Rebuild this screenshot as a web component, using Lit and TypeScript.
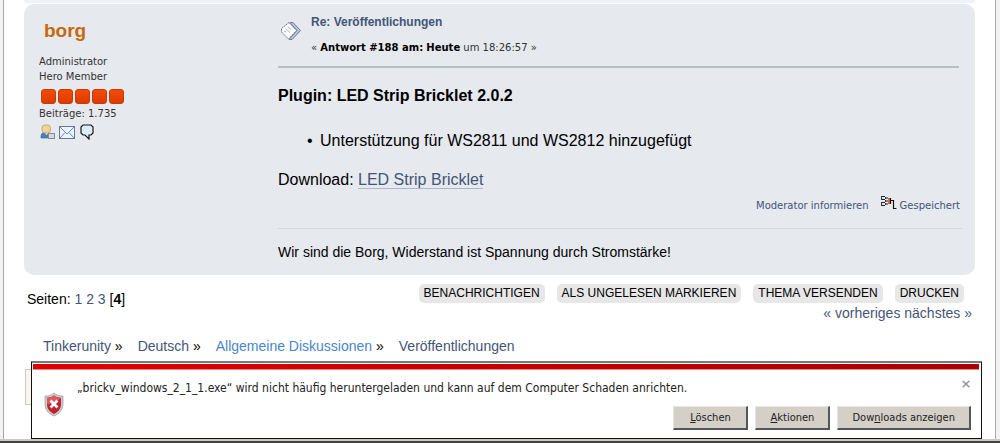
import { LitElement, html, css } from "lit";
import { customElement } from "lit/decorators.js";

@customElement("forum-post")
class ForumPost extends LitElement {
  static styles = css`
    :host {
      display: grid;
      grid-template-columns: 239px 1fr;
      padding: 11px 15px 14px;
      border-radius: 10px;
      background: #e6e9ee;
    }
    a { color: #445577; text-decoration: none; }
    h4, h5, p, ul { margin: 0; }
    .small { font: 10px/15px "DejaVu Sans", Verdana, sans-serif; color: #333; }
    .name { margin: 4px 0 11px 5px; font-size: 19px; line-height: 24px; }
    .name a { color: #c5690f; }
    .stars { display: flex; gap: 2px; margin: 5px 0 2px 2px; }
    .star {
      box-sizing: border-box;
      width: 15px;
      height: 15px;
      border: 1px solid #c43c0c;
      border-radius: 3px;
      background: linear-gradient(#f74a02, #dc3c00);
    }
    .contacts { display: flex; gap: 3px; margin: 3px 0 0 1px; }
    .contacts a { display: block; height: 16px; }
    svg { display: block; }
    .head { display: flex; gap: 9px; padding-bottom: 11px; border-bottom: 2px solid #b9bdc8; margin-right: 1px; }
    .head svg { margin: 6px 0 0 2px; }
    .subject { font-size: 12px; line-height: 15px; margin-bottom: 10px; }
    .head b { color: #000; }
    .title { font-size: 16px; line-height: 20px; font-weight: bold; margin-top: 18px; }
    .list { padding-left: 42px; margin: 25px 0 19px; font-size: 16px; line-height: 20px; }
    .list li { list-style: none; display: flex; }
    .list li::before { content: "•"; width: 13px; margin-left: -13px; }
    .text { font-size: 16px; line-height: 20px; }
    .text a { border-bottom: 1px solid #aab5d0; }
    .tools { display: flex; justify-content: flex-end; align-items: flex-end; gap: 12px; height: 23px; }
    .logged { display: flex; align-items: flex-end; gap: 3px; }
    .logged svg { margin-bottom: 3px; }
    .sig { margin-top: 15px; padding-top: 15px; border-top: 1px solid #d4d6da; font-size: 14px; line-height: 17px; margin-right: -2px; }
  `;

  render() {
    return html`
      <div>
        <h4 class="name"><a href="#">borg</a></h4>
        <div class="small">Administrator</div>
        <div class="small">Hero Member</div>
        <div class="stars">${[1, 2, 3, 4, 5].map(() => html`<span class="star"></span>`)}</div>
        <div class="small">Beiträge: 1.735</div>
        <div class="contacts">
          <a href="#" aria-label="Profil">
            <svg width="16" height="16" viewBox="0 0 16 16">
              <path d="M1 14V12Q1 9 4 8.500H8Q11 9 11 12V14Z" fill="#4b7fb8" stroke="#376799" stroke-width=".6" />
              <path d="M4 8.500L6.500 11L8.500 8.500Z" fill="#dcebf8" />
              <rect x="2" y="1" width="8.500" height="8" rx="3" fill="#ecd39b" stroke="#c3a05c" stroke-width=".8" />
              <rect x="8.500" y="9.500" width="6" height="5" fill="#d5d8dc" stroke="#858b94" />
            </svg>
          </a>
          <a href="#" aria-label="E-Mail">
            <svg width="17" height="16" viewBox="0 0 17 16">
              <rect x=".5" y="2.500" width="15" height="12" fill="#eaf4fc" stroke="#64799a" />
              <path d="M1 3L8 10L15 3M1 14L6 8.500M15 14L10 8.500" fill="none" stroke="#7389a8" />
            </svg>
          </a>
          <a href="#" aria-label="Persönliche Nachricht">
            <svg width="16" height="16" viewBox="0 0 16 16">
              <path d="M4 1H12L14 3V9L12 11H10V15L6 11H4L2 9V3Z" fill="#dcecf8" stroke="#15181c" stroke-width="1.200" />
            </svg>
          </a>
        </div>
      </div>
      <div>
        <div class="head">
          <svg width="22" height="20" viewBox="0 0 22 20">
            <path d="M10 1.500H13L20.500 9.500L12 18.500H9L17 9.500Z" fill="#b8c4e8" stroke="#747c92" />
            <path d="M9 1.500L16.500 9.500L8.500 18L1.500 11V7.500Z" fill="#fafbfd" stroke="#777d88" stroke-dasharray="2 .6" />
            <path d="M4 10L6 11M5.500 7.500L10 11.500M8 6L11.500 9" stroke="#b3b8c2" />
          </svg>
          <div>
            <h5 class="subject"><a href="#">Re: Veröffentlichungen</a></h5>
            <div class="small">« <b>Antwort #188 am:</b> <b>Heute</b> um 18:26:57 »</div>
          </div>
        </div>
        <p class="title">Plugin: LED Strip Bricklet 2.0.2</p>
        <ul class="list"><li>Unterstützung für WS2811 und WS2812 hinzugefügt</li></ul>
        <p class="text">Download: <a href="#">LED Strip Bricklet</a></p>
        <div class="tools small">
          <a href="#">Moderator informieren</a>
          <a class="logged" href="#">
            <svg width="16" height="15" viewBox="0 0 16 15">
              <path d="M1 1.500H4M1 4.500H4M1 7.500H4M1 10.500H4M4.500 3H7M4.500 6H7M4.500 9H7" stroke="#222" stroke-width="1.200" />
              <path d="M.500 1V5M.500 7V11M4.500 2V4M4.500 5V7M4.500 8V10" stroke="#333" />
              <path d="M8 3V9" stroke="#e8401c" stroke-width="1.600" />
              <path d="M9.500 3V9M9.500 5.500H12.500V13.500H15.500" fill="none" stroke="#111" stroke-width="1.200" />
            </svg>
            Gespeichert
          </a>
        </div>
        <div class="sig">Wir sind die Borg, Widerstand ist Spannung durch Stromstärke!</div>
      </div>
    `;
  }
}

@customElement("download-warning")
class DownloadWarning extends LitElement {
  static styles = css`
    :host {
      display: block;
      box-sizing: border-box;
      padding: 1px 2px 8px 1px;
      border: 1px solid #111;
      border-top: 2px solid #777a7c;
      background: #fff;
      font: 12px/16px "DejaVu Sans Condensed", Tahoma, sans-serif;
      color: #222;
    }
    .bar { height: 5px; background: linear-gradient(90deg, #e20000, #aa0000); border-bottom: 1px solid #e88; }
    .body { display: flex; padding-left: 11px; }
    .shield { display: block; margin-top: 22px; }
    .main { flex: 1; padding-left: 13px; }
    .line { display: flex; justify-content: space-between; padding: 6px 7px 0 0; }
    .message { margin: 4px 0 0; }
    .close { border: 0; background: none; padding: 0; width: 12px; height: 16px; color: #999; font: bold 13px/16px "DejaVu Sans", sans-serif; }
    .actions { display: flex; justify-content: flex-end; gap: 7px; margin-top: 10px; padding-right: 8px; }
    .action {
      height: 24px;
      min-width: 75px;
      padding: 0 14px;
      border: 1px solid;
      border-width: 1px 2px 2px 1px;
      border-color: #e6e4de #55565a #55565a #e6e4de;
      background: #d4d0c8;
      color: #222;
      font: 11px/16px "DejaVu Sans Condensed", Tahoma, sans-serif;
    }
  `;

  render() {
    return html`
      <div class="bar"></div>
      <div class="body">
        <svg class="shield" width="20" height="25" viewBox="0 0 20 25">
          <path d="M10 1C7 3.500 4 4 1 4V12C1 18 5 22 10 24C15 22 19 18 19 12V4C16 4 13 3.500 10 1Z" fill="#c9cccd" stroke="#989c9e" stroke-width=".7" />
          <path d="M10 3.500C8 5 5.500 5.700 3 5.800V12C3 17 6 20 10 22C14 20 17 17 17 12V5.800C14.500 5.700 12 5 10 3.500Z" fill="#c3202b" />
          <path d="M10 3.500C8 5 5.500 5.700 3 5.800V12Q10 13 17 6Q12 5.500 10 3.500Z" fill="#dd5960" />
          <path d="M6.500 8.500L13.500 15.500M13.500 8.500L6.500 15.500" stroke="#fff" stroke-width="2.800" />
        </svg>
        <div class="main">
          <div class="line">
            <p class="message">„brickv_windows_2_1_1.exe“ wird nicht häufig heruntergeladen und kann auf dem Computer Schaden anrichten.</p>
            <button class="close" aria-label="Schließen">×</button>
          </div>
          <div class="actions">
            <button class="action"><u>L</u>öschen</button>
            <button class="action"><u>A</u>ktionen</button>
            <button class="action">Dow<u>n</u>loads anzeigen</button>
          </div>
        </div>
      </div>
    `;
  }
}

@customElement("app-root")
class AppRoot extends LitElement {
  static styles = css`
    :host {
      display: flex;
      flex-direction: column;
      position: relative;
      height: 100vh;
      overflow: hidden;
      background: #f3f3f3;
      font-family: "Liberation Sans", Arial, sans-serif;
      color: #000;
    }
    a { color: #445577; text-decoration: none; }
    .page { flex: 1; min-height: 0; margin: 0 4px 0 3px; padding: 0 20px; border: solid #a9a9a9; border-width: 0 1px; background: #fff; }
    .previous { height: 3px; margin-bottom: 1px; border-radius: 0 0 10px 10px; background: #eff3f7; }
    .under { display: flex; justify-content: space-between; padding: 9px 3px 0; font-size: 14px; line-height: 18px; }
    .pages { padding-top: 6px; }
    .side { text-align: right; }
    .buttons { display: flex; gap: 12px; padding-right: 8px; margin-bottom: 1px; }
    .buttons { justify-content: flex-end; }
    .buttons a { padding: 0 5px; border-radius: 5px; background: #e7e7e7; color: #000; font-size: 12px; line-height: 19px; text-transform: uppercase; }
    .crumbs { display: flex; gap: 15px; margin: 15px 0 0; padding: 0 0 0 19px; list-style: none; font-size: 14px; line-height: 18px; }
    .crumbs .hot { color: #4a86c8; }
    .jump { height: 34px; margin: 14px 2px 0 1px; border: 1px solid #c8cac0; background: #f6f6ee; }
    .warning { position: absolute; left: 31px; right: 18px; bottom: 4px; }
    .taskbar { height: 2px; border-top: 2px solid #cdc9c0; background: #444; }
  `;

  render() {
    const crumbs = ["Tinkerunity", "Deutsch", "Allgemeine Diskussionen", "Veröffentlichungen"];
    return html`
      <main class="page">
        <div class="previous"></div>
        <forum-post></forum-post>
        <div class="under">
          <div class="pages">Seiten: <a href="#">1</a> <a href="#">2</a> <a href="#">3</a> [<b>4</b>]</div>
          <div class="side">
            <nav class="buttons">
              <a href="#">Benachrichtigen</a><a href="#">Als ungelesen markieren</a><a href="#">Thema versenden</a><a href="#">Drucken</a>
            </nav>
            <a href="#">« vorheriges</a> <a href="#">nächstes »</a>
          </div>
        </div>
        <ul class="crumbs">
          ${crumbs.map((c, i) => html`<li><a class=${i === 2 ? "hot" : ""} href="#">${c}</a>${i < 3 ? " »" : ""}</li>`)}
        </ul>
        <div class="jump"></div>
      </main>
      <div class="taskbar"></div>
      <download-warning class="warning"></download-warning>
    `;
  }
}
